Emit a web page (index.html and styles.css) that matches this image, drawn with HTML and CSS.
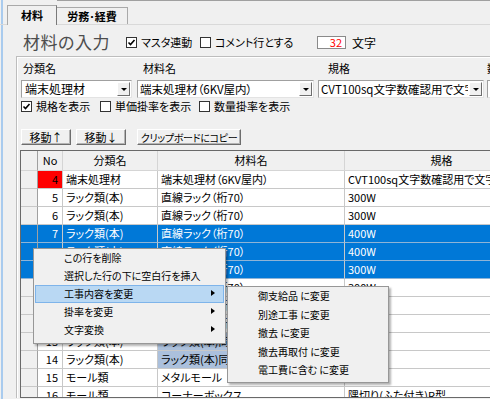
FILE: index.html
```html
<!DOCTYPE html>
<html lang="ja">
<head>
<meta charset="UTF-8">
<title>材料の入力</title>
<link rel="stylesheet" href="styles.css">
</head>
<body>
<div id="window">
	<div class="topline"></div>

	<div class="tabs">
		<div class="tab active">材料</div>
		<div class="tab">労務･経費</div>
	</div>

	<div id="panel">

		<div class="title-row">
			<span class="title">材料の入力</span>
			<span class="chk w-master"><span class="box"><svg width="9" height="9" viewBox="0 0 9 9"><polyline points="1.5,4.5 3.5,6.5 7.5,2" fill="none" stroke="#000" stroke-width="1.6"/></svg></span>マスタ連動</span>
			<span class="chk w-comment"><span class="box"></span>コメント行とする</span>
			<span class="numbox">32</span>
			<span class="unit">文字</span>
		</div>

		<div id="group">

			<div class="fields">
				<div class="field f1">
					<div class="lbl">分類名</div>
					<div class="combo"><span class="val big">端末処理材</span><span class="dd"><i></i></span></div>
				</div>
				<div class="field f2">
					<div class="lbl">材料名</div>
					<div class="combo"><span class="val">端末処理材（6KV屋内）</span><span class="dd"><i></i></span></div>
				</div>
				<div class="field f3">
					<div class="lbl">規格</div>
					<div class="combo"><span class="val">CVT100sq文字数確認用で文字</span><span class="dd"><i></i></span></div>
				</div>
				<div class="field f4">
					<div class="lbl">数</div>
					<div class="combo"><span class="val"></span></div>
				</div>
			</div>

			<div class="opts">
				<span class="chk w-kikaku"><span class="box"><svg width="9" height="9" viewBox="0 0 9 9"><polyline points="1.5,4.5 3.5,6.5 7.5,2" fill="none" stroke="#000" stroke-width="1.6"/></svg></span>規格を表示</span>
				<span class="chk w-tanka"><span class="box"></span>単価掛率を表示</span>
				<span class="chk"><span class="box"></span>数量掛率を表示</span>
			</div>

			<div class="btns">
				<button class="btn b-up">移動↑</button>
				<button class="btn b-down">移動↓</button>
				<button class="btn b-copy">クリップボードにコピー</button>
			</div>

			<div class="grid">
				<div class="row head">
					<div class="c rh"></div><div class="c">No</div><div class="c">分類名</div><div class="c">材料名</div><div class="c">規格</div>
				</div>
				<div class="row">
					<div class="c rh"></div><div class="c no red">4</div><div class="c">端末処理材</div><div class="c">端末処理材（6KV屋内）</div><div class="c">CVT100sq文字数確認用で文字</div>
				</div>
				<div class="row">
					<div class="c rh"></div><div class="c no">5</div><div class="c">ラック類(本)</div><div class="c">直線ラック（桁70）</div><div class="c">300W</div>
				</div>
				<div class="row">
					<div class="c rh"></div><div class="c no">6</div><div class="c">ラック類(本)</div><div class="c">直線ラック（桁70）</div><div class="c">300W</div>
				</div>
				<div class="row sel">
					<div class="c rh"></div><div class="c no">7</div><div class="c">ラック類(本)</div><div class="c">直線ラック（桁70）</div><div class="c">400W</div>
				</div>
				<div class="row sel">
					<div class="c rh"></div><div class="c no">8</div><div class="c">ラック類(本)</div><div class="c">直線ラック（桁70）</div><div class="c">400W</div>
				</div>
				<div class="row sel">
					<div class="c rh"></div><div class="c no">9</div><div class="c">ラック類(本)</div><div class="c">直線ラック（桁70）</div><div class="c">300W</div>
				</div>
				<div class="row">
					<div class="c rh"></div><div class="c no">10</div><div class="c">ラック類(本)</div><div class="c">直線ラック（桁70）</div><div class="c">300W</div>
				</div>
				<div class="row">
					<div class="c rh"></div><div class="c no">11</div><div class="c">ラック類(本)</div><div class="c">直線ラック（桁70）</div><div class="c"></div>
				</div>
				<div class="row">
					<div class="c rh"></div><div class="c no">12</div><div class="c">ラック類(本)</div><div class="c">直線ラック（桁70）</div><div class="c"></div>
				</div>
				<div class="row">
					<div class="c rh"></div><div class="c no">13</div><div class="c">ラック類(本)</div><div class="c hl">ラック類(本)同_ラック</div><div class="c"></div>
				</div>
				<div class="row">
					<div class="c rh"></div><div class="c no">14</div><div class="c">ラック類(本)</div><div class="c hl">ラック類(本)同_ラック</div><div class="c"></div>
				</div>
				<div class="row">
					<div class="c rh"></div><div class="c no">15</div><div class="c">モール類</div><div class="c">メタルモール</div><div class="c"></div>
				</div>
				<div class="row">
					<div class="c rh"></div><div class="c no">16</div><div class="c">モール類</div><div class="c">コーナーボックス</div><div class="c">隅切り(ふた付き)R型</div>
				</div>
			</div>

		</div>
	</div>

	<!-- context menu -->
	<div class="menu main-menu">
		<div class="item">この行を削除</div>
		<div class="item">選択した行の下に空白行を挿入</div>
		<div class="item hot">工事内容を変更<i class="arrow"></i></div>
		<div class="item">掛率を変更<i class="arrow"></i></div>
		<div class="item">文字変換<i class="arrow"></i></div>
	</div>

	<div class="menu sub-menu">
		<div class="item">御支給品 に変更</div>
		<div class="item">別途工事 に変更</div>
		<div class="item">撤去 に変更</div>
		<div class="item">撤去再取付 に変更</div>
		<div class="item">電工費に含む に変更</div>
	</div>
</div>
</body>
</html>
```

FILE: styles.css
```css
body
{
	margin: 0;
	background: #f0f0f0;
	font-family: "Noto Sans CJK JP", "Liberation Sans", sans-serif;
	font-size: 11px;
	font-feature-settings: "palt";
	color: #000;
}

#window
{
	position: relative;
	width: 490px;
	height: 399px;
	overflow: hidden;
	background: linear-gradient(to right, #f0f0f0 1px, #a9cbee 1px, #a9cbee 3px, #f0f0f0 3px);
}

.topline
{
	height: 1px;
	margin-left: 57px;
	background: #a0a0a0;
}

/* tabs */

.tabs
{
	display: flex;
	align-items: flex-end;
	height: 19px;
	margin-top: 4px;
	padding-left: 7px;
}

.tab
{
	box-sizing: border-box;
	height: 17px;
	line-height: 16px;
	padding: 0 8px;
	border: 1px solid #a9a9a9;
	border-bottom: 0;
	font-weight: bold;
	text-align: center;
	background: #f0f0f0;
}

.tab.active
{
	width: 50px;
	height: 20px;
	line-height: 18px;
	margin-bottom: -1px;
	position: relative;
	border-right-color: #7a7a7a;
}

.tab + .tab
{
	width: 71px;
	border-left: 0;
}

#panel
{
	border-top: 1px solid #d9d9d9;
}

/* title row */

.title-row
{
	display: flex;
	align-items: center;
	box-sizing: border-box;
	height: 31px;
	padding: 3px 0 0 23px;
}

.title
{
	width: 103px;
	font-size: 17px;
	line-height: 20px;
	color: #4d4d4d;
	letter-spacing: 0.5px;
}

.chk
{
	display: flex;
	align-items: center;
	flex-shrink: 0;
	white-space: nowrap;
}

.box
{
	box-sizing: border-box;
	width: 11px;
	height: 11px;
	margin-right: 4px;
	border: 1px solid #333;
	background: #fff;
	display: flex;
	align-items: center;
	justify-content: center;
}

.w-master  { width: 74px; }
.w-comment { width: 117px; }

.numbox
{
	box-sizing: border-box;
	width: 29px;
	height: 13px;
	line-height: 11px;
	padding-right: 3px;
	border: 1px solid #8a8a8a;
	background: #fff;
	color: #ff0000;
	text-align: right;
}

.unit
{
	margin-left: 6px;
	font-size: 12px;
}

/* group */

#group
{
	margin-left: 16px;
	padding-left: 3px;
	border-left: 1px solid #bdbdbd;
	border-top: 1px solid #bdbdbd;
	box-shadow: inset 1px 1px 0 #fff;
}

.fields
{
	display: flex;
	margin-top: 4px;
}

.field
{
	flex-shrink: 0;
}

.lbl
{
	height: 14px;
	line-height: 14px;
	white-space: nowrap;
}

.f1 { width: 111px; margin-left: 1px; margin-right: 5px; }
.f2 { width: 177px; margin-right: 4px; }
.f3 { width: 166px; margin-right: 3px; }
.f4 { width: 40px; }

.f1 .lbl { padding-left: 2px; }
.f2 .lbl { padding-left: 6px; }
.f3 .lbl { padding-left: 10px; }

.combo
{
	box-sizing: border-box;
	display: flex;
	height: 18px;
	margin-top: 5px;
	border: 1px solid #a0a0a0;
	border-right-color: #e3e3e3;
	border-bottom-color: #e3e3e3;
	background: #fff;
}

.combo .val
{
	flex: 1;
	padding-left: 2px;
	line-height: 16px;
	font-size: 11.5px;
	white-space: nowrap;
	overflow: hidden;
}

.combo .val.big
{
	font-size: 12px;
	padding-left: 3px;
}

.combo .dd
{
	box-sizing: border-box;
	width: 13px;
	margin: 1px;
	background: #f0f0f0;
	border: 1px solid;
	border-color: #fff #6d6d6d #6d6d6d #fff;
	display: flex;
	align-items: center;
	justify-content: center;
}

.combo .dd i
{
	width: 0;
	height: 0;
	border-left: 3px solid transparent;
	border-right: 3px solid transparent;
	border-top: 3px solid #000;
}

.opts
{
	display: flex;
	align-items: center;
	height: 14px;
	margin-top: 1px;
	padding-left: 1px;
}

.w-kikaku { width: 79px; }
.w-tanka  { width: 99px; }

/* buttons */

.btns
{
	display: flex;
	margin-top: 16px;
	padding-left: 1px;
}

.btn
{
	box-sizing: border-box;
	flex-shrink: 0;
	height: 16px;
	padding: 0;
	font: inherit;
	line-height: 13px;
	white-space: nowrap;
	background: #f0f0f0;
	border: 1px solid;
	border-color: #fff #6d6d6d #6d6d6d #fff;
	box-shadow: inset -1px -1px 0 #b4b4b4;
}

.b-up   { width: 50px; }
.b-down { width: 50px; margin-left: 5px; }
.b-copy { width: 104px; margin-left: 11px; font-size: 10px; letter-spacing: -0.3px; }

/* grid */

.grid
{
	box-sizing: border-box;
	width: 520px;
	height: 248px;
	margin-top: 5px;
	border: 1px solid #696969;
	overflow: hidden;
	background: #fff;
}

.row
{
	display: grid;
	grid-template-columns: 17px 25px 95px 187px 1fr;
	height: 18px;
}

.row.head
{
	height: 20px;
	background: #f0f0f0;
}

.c
{
	box-sizing: border-box;
	padding: 0 3px;
	border-right: 1px solid #c8c8c8;
	border-bottom: 1px solid #c8c8c8;
	line-height: 17px;
	white-space: nowrap;
	overflow: hidden;
}

.head .c
{
	line-height: 19px;
	text-align: center;
	border-right-color: #d5d5d5;
	border-bottom-color: #d5d5d5;
}

.c.rh
{
	background: #f0f0f0;
	border-right-color: #a0a0a0;
}

.c.no
{
	text-align: right;
	padding-right: 4px;
}

.c.red
{
	background: #ff0000;
}

.c.hl
{
	background: #abc0dc;
}

.row.sel .c
{
	background: #0078d7;
	color: #fff;
	border-bottom-color: #8fb4d6;
}

/* context menus */

.menu
{
	position: absolute;
	box-sizing: border-box;
	background: #f0f0f0;
	border: 1px solid #979797;
	box-shadow: 2px 2px 2px rgba(0, 0, 0, 0.3);
	font-size: 10px;
}

.main-menu
{
	left: 33px;
	top: 248px;
	width: 193px;
	padding-bottom: 4px;
}

.sub-menu
{
	left: 227px;
	top: 286px;
	width: 162px;
	padding-bottom: 2px;
}

.menu .item
{
	position: relative;
	box-sizing: border-box;
	height: 18px;
	line-height: 18px;
	margin: 0 1px;
	padding-left: 29px;
	white-space: nowrap;
}

.sub-menu .item
{
	height: 18.5px;
	line-height: 18.5px;
}

.menu .item.hot
{
	background: #b9d8f3;
	border: 1px solid #7eb4ea;
	line-height: 16px;
	padding-left: 28px;
}

.menu .arrow
{
	position: absolute;
	right: 9px;
	top: 5px;
	width: 0;
	height: 0;
	border-left: 4px solid #000;
	border-top: 3.5px solid transparent;
	border-bottom: 3.5px solid transparent;
}

.menu .hot .arrow
{
	right: 8px;
	top: 4px;
}
```
